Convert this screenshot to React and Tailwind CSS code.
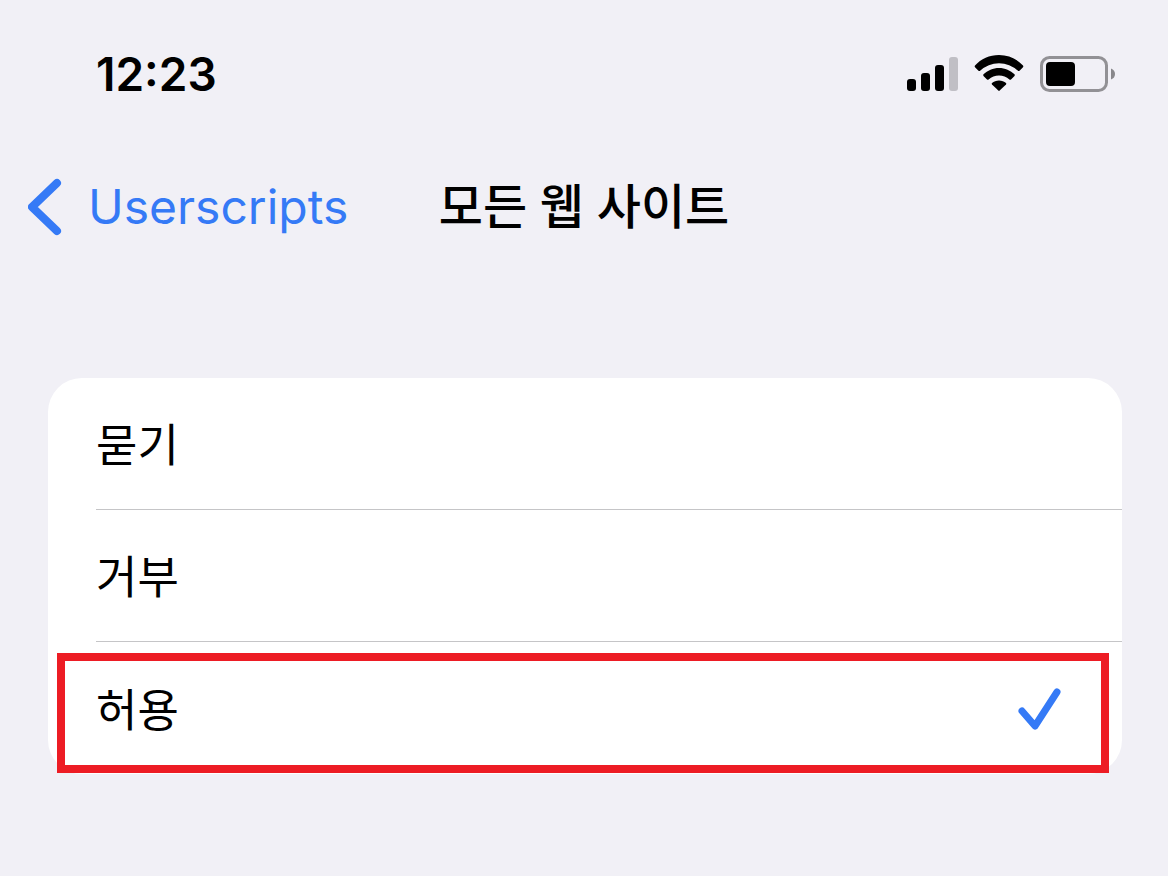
import React, { useState } from 'react';

const OPTIONS = [
  { id: 'ask', label: '묻기' },
  { id: 'deny', label: '거부' },
  { id: 'allow', label: '허용', highlighted: true },
];

function SignalIcon() {
  return (
    <svg width="51" height="36" viewBox="0 0 51 36" aria-hidden="true">
      <rect x="0" y="23" width="9" height="12" rx="3" />
      <rect x="14" y="17" width="9" height="18" rx="3" />
      <rect x="28" y="9" width="9" height="26" rx="3" />
      <rect x="42" y="1" width="9" height="34" rx="3" fill="#c0bfc5" />
    </svg>
  );
}

function WifiIcon() {
  return (
    <svg width="50" height="38" viewBox="0 -1 50 38" aria-hidden="true">
      <path d="M25 -1 C34.5 -1 43 3 49 9.5 Q49.6 10.4 49 11.2 L45.5 14.7 Q44.7 15.4 43.9 14.7 A27.5 27.5 0 0 0 6.1 14.7 Q5.3 15.4 4.5 14.7 L1 11.2 Q0.4 10.4 1 9.5 C7 3 15.5 -1 25 -1 Z" />
      <path d="M25 12 C31 12 36.5 14.5 40.5 18.3 Q41.2 19.1 40.5 19.9 L37 23.4 Q36.2 24.1 35.4 23.4 A15.5 15.5 0 0 0 14.6 23.4 Q13.8 24.1 13 23.4 L9.5 19.9 Q8.8 19.1 9.5 18.3 C13.5 14.5 19 12 25 12 Z" />
      <path d="M25 24.5 C27.8 24.5 30.2 25.5 32 27 Q32.7 27.7 32 28.5 L25.7 34.6 Q25 35.2 24.3 34.6 L18 28.5 Q17.3 27.7 18 27 C19.8 25.5 22.2 24.5 25 24.5 Z" />
    </svg>
  );
}

function BatteryIcon() {
  return (
    <svg width="76" height="36" viewBox="0 0 76 36" aria-hidden="true">
      <rect x="1.5" y="1.5" width="65" height="33" rx="8" fill="none" stroke="#929195" strokeWidth="3" />
      <rect x="6" y="6" width="29" height="24" rx="4" />
      <path d="M71 12.5 Q75 14 75 18 Q75 22 71 23.5 Z" fill="#88878b" />
    </svg>
  );
}

function StatusBar() {
  return (
    <div className="flex h-[148px] items-center justify-between pr-[52px] pl-24">
      <span className="text-[46px] leading-none font-semibold">12:23</span>
      <div className="flex items-center gap-4">
        <SignalIcon />
        <WifiIcon />
        <BatteryIcon />
      </div>
    </div>
  );
}

function NavBar({ title }) {
  return (
    <header className="grid h-[118px] grid-cols-[1fr_auto_1fr] items-center px-7 text-[48px] leading-none">
      <a href="#userscripts" className="flex items-center gap-[26px] text-[#357af6]">
        <svg width="34" height="58" viewBox="0 0 34 58" fill="none" aria-hidden="true">
          <path d="M29 5 L4 29 L29 53" stroke="currentColor" strokeWidth="8" strokeLinecap="round" strokeLinejoin="round" />
        </svg>
        Userscripts
      </a>
      <h1 className="font-medium">{title}</h1>
    </header>
  );
}

function OptionRow({ option, checked, onSelect }) {
  return (
    <label className="group relative flex h-[132px] cursor-pointer pl-12">
      <input
        type="radio"
        name="permission"
        value={option.id}
        checked={checked}
        onChange={() => onSelect(option.id)}
        className="sr-only"
      />
      <span className="flex grow items-center justify-between border-b border-[#c5c5c7] pt-1 pr-[60px] group-last:border-b-0">
        <span className="text-[45px] leading-none">{option.label}</span>
        {checked && (
          <svg width="44" height="44" viewBox="0 0 44 44" fill="none" aria-hidden="true">
            <path d="M4 23 L17 38 L39 4" stroke="#357af6" strokeWidth="7" strokeLinecap="round" strokeLinejoin="round" />
          </svg>
        )}
      </span>
      {option.highlighted && (
        <span className="pointer-events-none absolute top-[11px] right-[13px] bottom-px left-[9px] border-8 border-[#ed1c24]" />
      )}
    </label>
  );
}

function App() {
  const [selected, setSelected] = useState('allow');

  return (
    <div className="min-h-screen bg-[#f1f0f6] font-['Inter','Noto_Sans_CJK_KR',sans-serif] text-black">
      <StatusBar />
      <NavBar title="모든 웹 사이트" />

      {/* Permission choices */}
      <main className="pt-28 pr-[46px] pb-24 pl-12">
        <fieldset className="rounded-[34px] bg-white">
          {OPTIONS.map((option) => (
            <OptionRow
              key={option.id}
              option={option}
              checked={selected === option.id}
              onSelect={setSelected}
            />
          ))}
        </fieldset>
      </main>
    </div>
  );
}

export default App;
